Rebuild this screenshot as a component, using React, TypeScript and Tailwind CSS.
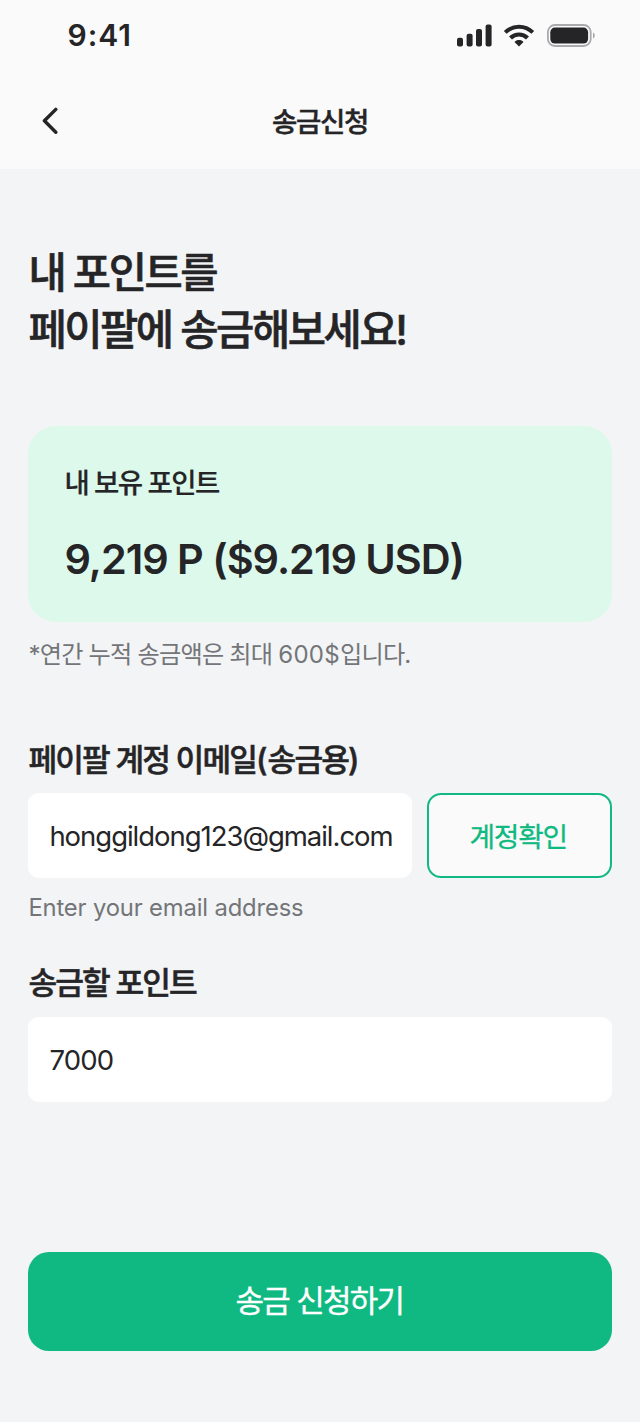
import React from 'react';

interface FieldLabelProps {
  children: React.ReactNode;
}

const StatusBar = () => (
  <div className="flex h-[71px] items-center justify-between pl-[67.5px] pr-[44px]">
    <span className="text-[30px] leading-[71px] font-semibold tracking-[1px]">9:41</span>
    <div className="flex items-center">
      <svg width="140" height="26" viewBox="0 0 140 26" fill="none">
        {/* signal */}
        <rect x="1" y="14.8" width="6" height="8.6" rx="2" fill="currentColor" />
        <rect x="10.6" y="10.8" width="6" height="12.6" rx="2" fill="currentColor" />
        <rect x="20" y="6" width="6" height="17.4" rx="2" fill="currentColor" />
        <rect x="29.6" y="1.6" width="6" height="21.8" rx="2" fill="currentColor" />
        {/* wifi */}
        <path d="M49.2 9.4C57.2 1.8 68.8 1.8 76.8 9.4" stroke="currentColor" strokeWidth="4" />
        <path d="M54.5 15.1C59.4 10.3 66.6 10.3 71.5 15.1" stroke="currentColor" strokeWidth="4.2" />
        <path d="M58.5 18.9C60.9 16.5 65.1 16.5 67.5 18.9L63 23.6Z" fill="currentColor" />
        {/* battery */}
        <rect x="91.9" y="2" width="42.8" height="21" rx="7" stroke="#A9AAAC" strokeWidth="1.8" />
        <rect x="94.3" y="4.6" width="37.8" height="16" rx="4.6" fill="currentColor" />
        <path d="M137 9.6C139.4 10.6 139.4 14.6 137 15.6Z" fill="#A9AAAC" />
      </svg>
    </div>
  </div>
);

const FieldLabel: React.FC<FieldLabelProps> = ({ children }) => (
  <h2 className="pt-[2px] text-[31.2px] leading-[46px] font-medium tracking-[-1.85px] [-webkit-text-stroke:0.5px_currentColor]">{children}</h2>
);

export default function App() {
  return (
    <div className="flex h-[1422px] w-[640px] flex-col overflow-hidden bg-[#F2F4F6] font-['Inter','Noto_Sans_CJK_KR',sans-serif] text-[#252527]">
      <header className="h-[169px] shrink-0 bg-[#FAFAFA]">
        <StatusBar />
        <div className="grid h-[98px] grid-cols-[100px_1fr_100px] items-center">
          <svg className="ml-[40px]" width="20" height="28" viewBox="0 0 20 28" fill="none">
            <path d="M15.8 3.4L4.4 14.8L15.8 26.2" stroke="currentColor" strokeWidth="3.4" strokeLinecap="round" strokeLinejoin="round" />
          </svg>
          <h1 className="pt-[4px] text-center text-[27.6px] leading-[40px] font-medium tracking-[-1.4px] [-webkit-text-stroke:0.4px_currentColor]">송금신청</h1>
        </div>
      </header>

      <main className="flex flex-col pr-[28.5px] pl-[28.4px] whitespace-nowrap">
        <p className="mt-[76px] text-[41.6px] leading-[57px] font-medium tracking-[-2.45px] [-webkit-text-stroke:0.6px_currentColor]">
          내 포인트를
          <br />
          페이팔에 송금해보세요!
        </p>

        <section className="mt-[67px] h-[196px] rounded-[28px] bg-[#DCF9EB] px-[36px] pt-[37px]">
          <p className="text-[27.5px] leading-[40px] font-medium tracking-[-1.5px] [-webkit-text-stroke:0.2px_currentColor]">내 보유 포인트</p>
          <p className="mt-[24px] text-[41.4px] leading-[64px] font-semibold tracking-[-1px]">9,219 P ($9.219 USD)</p>
        </section>
        <p className="mt-[15px] text-[24.2px] leading-[36px] tracking-[-0.8px] text-[#747578]">
          *연간 누적 송금액은 최대 <span className="text-[24px] tracking-[0.3px]">600$</span>입니다.
        </p>

        <div className="mt-[62px]">
          <FieldLabel>
            페이팔 계정 이메일<span className="tracking-[0px]">(</span>송금용<span className="tracking-[-0.4px]">)</span>
          </FieldLabel>
        </div>
        <div className="mt-[10px] flex gap-[14.5px]">
          <div className="flex h-[85px] w-[384px] items-center rounded-[11px] bg-white pt-[3px] pl-[21px] text-[27.5px] tracking-[-1.03px]">
            honggildong123@gmail.com
          </div>
          <button className="h-[85px] flex-1 rounded-[14px] border-2 border-[#10B981] bg-[#FAFAFA] pt-[4px] pr-[2px] text-[27.8px] tracking-[-1.2px] text-[#10B981] [-webkit-text-stroke:0.3px_currentColor]">
            계정확인
          </button>
        </div>
        <p className="mt-[12px] text-[23.8px] leading-[36px] tracking-[-0.15px] text-[#747578]">Enter your email address</p>

        <div className="mt-[32px]">
          <FieldLabel>송금할 포인트</FieldLabel>
        </div>
        <div className="mt-[11px] flex h-[85px] items-center rounded-[11px] bg-white pt-[2px] pl-[21px] text-[27.5px] tracking-[-0.8px]">7000</div>

        <button className="mt-[150px] h-[99px] rounded-[21px] bg-[#10B981] pr-[1px] text-[31px] tracking-[-1.7px] text-white [-webkit-text-stroke:0.3px_currentColor]">
          송금 신청하기
        </button>
      </main>
    </div>
  );
}
